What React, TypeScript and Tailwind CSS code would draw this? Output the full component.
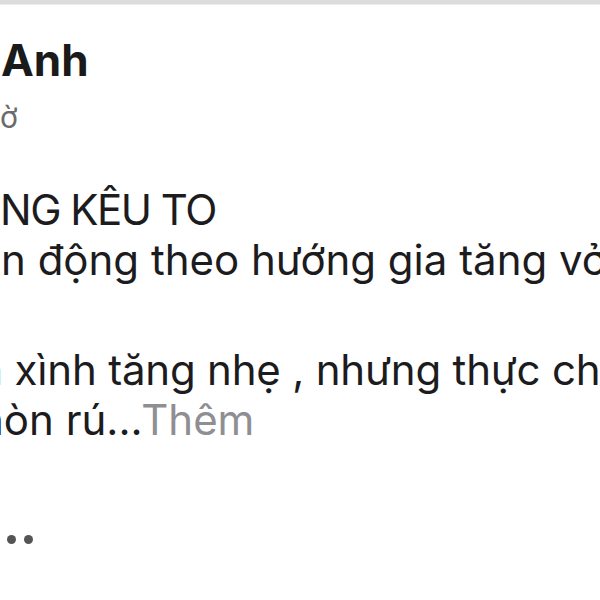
import React from "react";

// hidden prefix: zero-width box whose text overflows to the left edge and gets clipped
function Cut({ children }: { children: React.ReactNode }) {
  return <span className="inline-flex w-0 justify-end">{children}</span>;
}

export default function App() {
  return (
    <div
      className="relative w-[600px] h-[600px] overflow-hidden bg-white text-[#1c1c1e]"
      style={{ fontFamily: "Inter, 'Noto Sans', sans-serif" }}
    >
      <div className="h-[5px] bg-[#dcdcdc] border-b border-[#ececec]" />

      <div className="mt-[29px] pl-[1px] text-[44px] leading-[53px] font-bold whitespace-nowrap text-[#1a1a1a]">
        <Cut>Hoàng&nbsp;</Cut>Anh
      </div>
      <div className="mt-[12px] text-[30px] leading-[36px] whitespace-nowrap text-[#6b6b6b]">
        <Cut>1 gi</Cut>ờ
      </div>

      <div className="mt-[50px] text-[42px] leading-[50px] whitespace-nowrap">
        <div className="pl-[0px] tracking-[-1.5px]">
          <Cut>THỊ TRƯỜ</Cut>NG KÊU TO
        </div>
        <div className="pl-[1px]">
          <Cut>Thị trường vậ</Cut>n động theo hướng gia tăng vở
        </div>
        <div className="mt-[60px] pl-[3px] tracking-[-0.2px]">
          <Cut>Vẻ ngoài xinh</Cut>&nbsp;xình tăng nhẹ , nhưng thực chất
        </div>
        <div className="-ml-[21px]">
          <Cut>bên trong đã </Cut>hòn rú...<span className="text-[#8e8e93]">Thêm</span>
        </div>
      </div>

      <div className="mt-[90px] flex items-center gap-[8px] pl-[7px]">
        <span className="w-[9px] h-[9px] rounded-full bg-[#555]" />
        <span className="w-[9px] h-[9px] rounded-full bg-[#555]" />
      </div>
    </div>
  );
}
